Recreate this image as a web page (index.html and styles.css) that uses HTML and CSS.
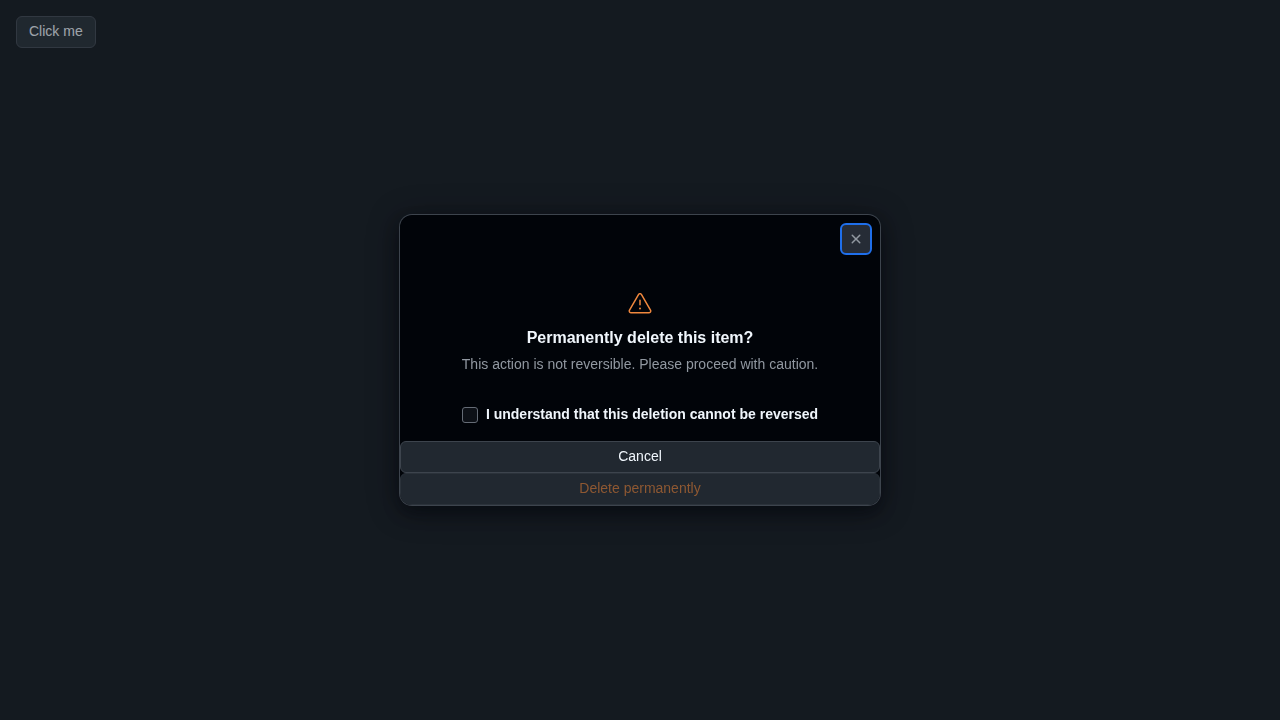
FILE: index.html
```
<!DOCTYPE html>
<html lang="en">
<head>
<meta charset="utf-8">
<title>Delete item</title>
<link rel="stylesheet" href="styles.css">
</head>
<body>
<button class="btn" type="button">Click me</button>
<div class="backdrop">
  <div class="dialog" role="alertdialog" aria-modal="true" aria-labelledby="dialog-title">
    <div class="dialog-header">
      <button class="close" type="button" aria-label="Close">
        <svg width="16" height="16" viewBox="0 0 16 16" aria-hidden="true"><path fill="currentColor" d="M3.72 3.72a.75.75 0 0 1 1.06 0L8 6.94l3.22-3.22a.749.749 0 0 1 1.275.326.749.749 0 0 1-.215.734L9.06 8l3.22 3.22a.749.749 0 0 1-.326 1.275.749.749 0 0 1-.734-.215L8 9.06l-3.22 3.22a.751.751 0 0 1-1.042-.018.751.751 0 0 1-.018-1.042L6.94 8 3.72 4.78a.75.75 0 0 1 0-1.06Z"/></svg>
      </button>
    </div>
    <div class="message">
      <svg class="alert-icon" width="24" height="24" viewBox="0 0 24 24" aria-hidden="true"><path fill="currentColor" d="M13 17.5a1 1 0 1 1-2 0 1 1 0 0 1 2 0Zm-.25-8.25a.75.75 0 0 0-1.5 0v4.5a.75.75 0 0 0 1.5 0v-4.5Z"/><path fill="currentColor" d="M9.836 3.244c.963-1.665 3.365-1.665 4.328 0l8.967 15.504c.963 1.667-.24 3.752-2.165 3.752H3.034c-1.926 0-3.128-2.085-2.165-3.752Zm3.03.751a1.002 1.002 0 0 0-1.734 0L2.168 19.499A1.002 1.002 0 0 0 3.034 21h17.932a1.002 1.002 0 0 0 .866-1.5L12.866 3.994Z"/></svg>
      <h1 class="title" id="dialog-title">Permanently delete this item?</h1>
      <p class="description">This action is not reversible. Please proceed with caution.</p>
    </div>
    <div class="confirm">
      <input class="checkbox" type="checkbox" id="confirm">
      <label class="confirm-label" for="confirm">I understand that this deletion cannot be reversed</label>
    </div>
    <div class="footer">
      <button class="btn" type="button">Cancel</button>
      <button class="btn danger" type="button" disabled>Delete permanently</button>
    </div>
  </div>
</div>
</body>
</html>
```
FILE: styles.css
```
* { box-sizing: border-box; }
body {
  margin: 0;
  padding: 16px;
  background: #0d1117;
  color: #f0f6fc;
  font: 14px/20px "Liberation Sans", Arial, sans-serif;
}
.btn {
  height: 32px;
  padding: 0 12px 2px;
  border: 1px solid #3d444d;
  border-radius: 6px;
  background: #212830;
  color: #f0f6fc;
  font: inherit;
}
.backdrop {
  position: fixed;
  inset: 0;
  display: flex;
  align-items: center;
  justify-content: center;
  background: rgba(33, 40, 48, 0.4);
}
.dialog {
  width: 480px;
  max-width: calc(100% - 32px);
  overflow: hidden;
  border-radius: 12px;
  background: #010409;
  box-shadow: 0 0 0 1px #3d444d, 0 8px 16px rgba(1, 4, 9, 0.4), 0 4px 32px rgba(1, 4, 9, 0.4);
}
.dialog-header {
  display: flex;
  justify-content: flex-end;
  padding: 8px 8px 0;
}
.close {
  display: grid;
  place-items: center;
  width: 32px;
  height: 32px;
  padding: 0;
  border: 2px solid #1f6feb;
  border-radius: 6px;
  background: #262c36;
  color: #9198a1;
}
.message {
  display: flex;
  flex-direction: column;
  align-items: center;
  padding: 36px 24px 30px;
  text-align: center;
}
.alert-icon { color: #f0883e; }
.title {
  margin: 11px 0 4px;
  font-size: 16px;
  line-height: 24px;
}
.description { margin: 0; color: #9198a1; }
.confirm {
  display: flex;
  justify-content: center;
  gap: 8px;
  padding-bottom: 17px;
}
.checkbox {
  appearance: none;
  width: 16px;
  height: 16px;
  margin: 3px 0 0;
  border: 1px solid #656c76;
  border-radius: 3px;
  background: #0d1117;
}
.confirm-label { font-weight: 700; }
.footer { display: flex; flex-direction: column; }
.danger { border-color: #2b323a; color: #8e5832; }
```
